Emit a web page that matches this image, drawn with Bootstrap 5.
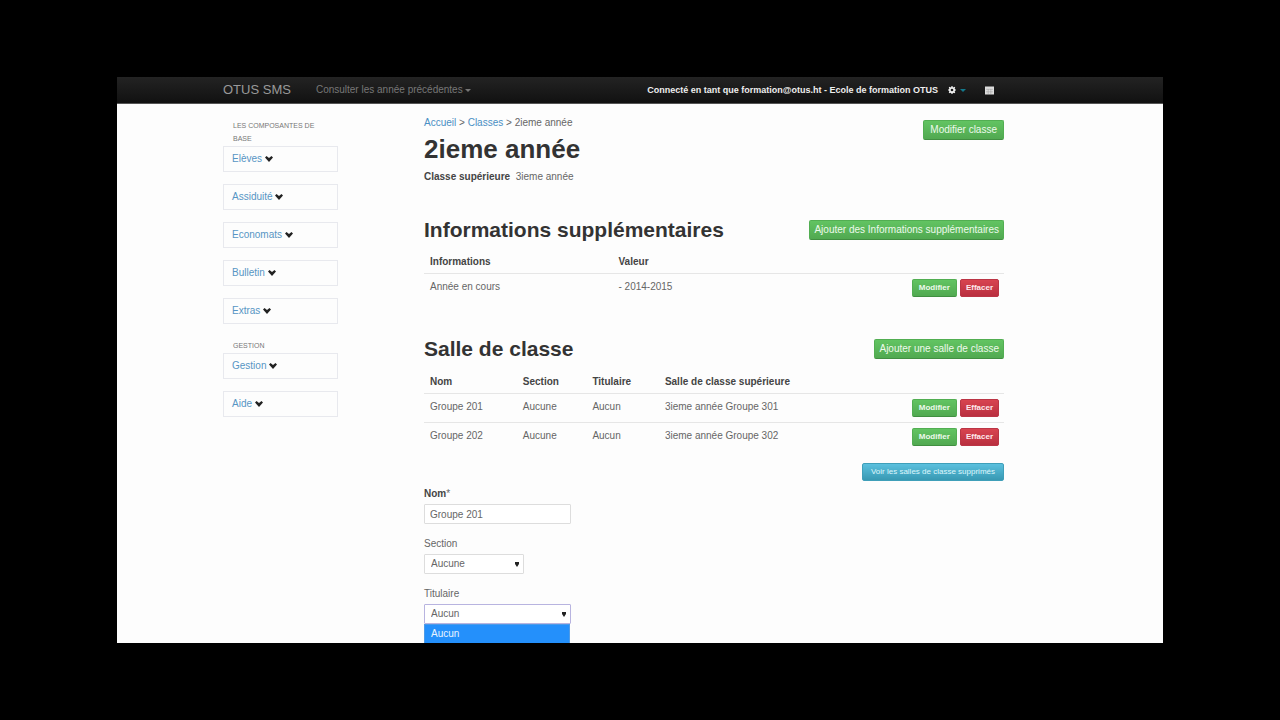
<!DOCTYPE html>
<html lang="fr">
<head>
<meta charset="utf-8">
<meta name="viewport" content="width=device-width, initial-scale=1">
<title>OTUS SMS - 2ieme année</title>
<link href="https://cdn.jsdelivr.net/npm/bootstrap@5.3.0/dist/css/bootstrap.min.css" rel="stylesheet">
<style>
body { background: #000; font-family: "Liberation Sans", Arial, sans-serif; font-size: 10px; line-height: 14px; color: #666; padding: 77px 117px; height: 100vh; overflow: hidden; }
a { color: #4a8fc4; text-decoration: none; }
.screen { background: #fdfdfd; height: 100%; overflow: hidden; }
.wrap { width: 100%; max-width: 834px; margin: 0 auto; }
.topbar { background: linear-gradient(#232323, #111); border-bottom: 1px solid #555; padding: 0; height: 27px; }
.topbar .wrap { padding-right: 63px; }
.topbar .navbar-brand { font-size: 13px; line-height: 24px; color: #999; padding: 0; margin: 0 25px 0 0; }
.topbar a { color: #777; }
.topbar .who { color: #eee; font-size: 9px; margin-right: 10px; }
.topbar .calendar { margin-left: 19px; }
.caret { display: inline-block; border: 3px solid transparent; border-top-color: currentColor; border-bottom: 0; vertical-align: middle; }
.side { width: 115px; flex: none; padding-top: 15px; margin-right: 86px; }
.side h6 { font-size: 7px; line-height: 13px; font-weight: 400; color: #777; text-transform: uppercase; margin: 0; padding: 0 10px 1px; }
.side .entry { display: block; border: 1px solid #e8e9ee; height: 26px; line-height: 24px; padding-left: 8px; margin-bottom: 12px; color: #5795c4; }
.side h6:not(:first-child) { padding-top: 3px; }
.content { flex: 1; padding-top: 12px; margin-right: 53px; min-width: 0; }
h1 { font-size: 26px; line-height: 30px; font-weight: 700; color: #333; margin: 4px 0 6px; }
h2 { font-size: 21px; line-height: 28px; font-weight: 700; color: #333; margin: 0; }
.content b, .content th { color: #444; font-weight: 700; }
.act { --bs-btn-padding-x: 4px; --bs-btn-padding-y: 2px; --bs-btn-font-size: 10px; --bs-btn-line-height: 14px; --bs-btn-border-radius: 2px; color: #eefaec; border-color: #52ae52; border-bottom-color: #418f41; background: linear-gradient(#62c462, #51a951); }
.act-page { --bs-btn-padding-x: 6px; }
.act-sm { --bs-btn-padding-x: 6px; --bs-btn-padding-y: 1px; --bs-btn-font-size: 8px; --bs-btn-font-weight: 700; }
.act-danger { --bs-btn-padding-x: 5px; background: linear-gradient(#d84450, #b92f3f); border-color: #bb3545; color: #ffe9ec; }
.act-info { --bs-btn-padding-x: 8px; --bs-btn-font-weight: 400; background: linear-gradient(#5bc0de, #3899b3); border-color: #3f9fb9; color: #def6fb; }
.pair { gap: 3px; }
.rooms { padding-top: 25px; }
.grid-table { table-layout: fixed; margin: 5px 0 0; --bs-table-bg: transparent; }
.grid-table th, .grid-table td { padding: 5px 6px; vertical-align: top; border-bottom: 0; color: #666; }
.grid-table th { color: #444; padding: 6px 6px 4px; }
.rooms .grid-table th { padding: 7px 6px 4px; }
.grid-table tbody tr { border-top: 1px solid #e6e6e6; }
.grid-table td { line-height: 16px; }
.grid-table td:last-child { padding-right: 5px; }
.deleted { padding-top: 12px; margin-bottom: 6px; }
.field { width: 147px; height: 20px; border: 1px solid #ddd; border-radius: 1px; padding: 0 5px; font-size: 10px; line-height: 14px; color: #666; background-color: #fff; }
select.field { appearance: none; background-image: url("data:image/svg+xml,%3Csvg xmlns='http://www.w3.org/2000/svg' width='4' height='5'%3E%3Cpath d='M0 0h4v2L2 5 0 2z' fill='%23222'/%3E%3C/svg%3E"); background-repeat: no-repeat; background-position: right 4px center; padding-left: 6px; }
.field.short { width: 100px; }
.field.open { border-color: #b8b4e0; }
.choices { top: 100%; left: 0; width: 146px; background: #2490fb; border: 1px solid #4d9be8; color: #e8f4ff; margin: 0; padding: 2px 6px 4px; list-style: none; }
.entry-row { margin-bottom: 13px; }
.entry-row label { display: block; margin-bottom: 3px; }
</style>
</head>
<body>
<div class="screen">
  <nav class="navbar topbar">
    <div class="wrap d-flex align-items-center">
      <a class="navbar-brand" href="#">OTUS SMS</a>
      <a href="#">Consulter les année précédentes <span class="caret"></span></a>
      <span class="who ms-auto fw-bold">Connecté en tant que formation@otus.ht - Ecole de formation OTUS</span>
      <a class="d-flex align-items-center" href="#" aria-label="Paramètres">
        <svg width="8" height="8" viewBox="0 0 9 9"><circle cx="4.500" cy="4.500" r="2.500" fill="none" stroke="#eee" stroke-width="2"/><path d="M4.500 0v1.500M4.500 7.500V9M0 4.500h1.500M7.500 4.500H9M1.300 1.300l1 1M6.700 6.700l1 1M7.700 1.300l-1 1M2.300 6.700l-1 1" stroke="#eee" stroke-width="1.400"/></svg>
        <svg class="ms-1" width="6" height="3" viewBox="0 0 6 3"><path d="M0 0h6L3 3z" fill="#13798c"/></svg>
      </a>
      <a class="calendar d-flex" href="#" aria-label="Calendrier">
        <svg width="9" height="9" viewBox="0 0 9 9"><path fill="#ddd" d="M0 .500h9v8H0z"/><path d="M1 3.300h7M1 5.800h7M3.200 3v5M5.800 3v5" stroke="#999" stroke-width=".5"/></svg>
      </a>
    </div>
  </nav>
  <div class="wrap d-flex">
    <aside class="side">
      <h6>Les composantes de base</h6>
      <a class="entry" href="#">Elèves <svg width="8" height="6" viewBox="0 0 8 6"><path d="M0 1.500L1.500 0 4 2 6.500 0 8 1.500 4 6z" fill="#222"/></svg></a>
      <a class="entry" href="#">Assiduité <svg width="8" height="6" viewBox="0 0 8 6"><path d="M0 1.500L1.500 0 4 2 6.500 0 8 1.500 4 6z" fill="#222"/></svg></a>
      <a class="entry" href="#">Economats <svg width="8" height="6" viewBox="0 0 8 6"><path d="M0 1.500L1.500 0 4 2 6.500 0 8 1.500 4 6z" fill="#222"/></svg></a>
      <a class="entry" href="#">Bulletin <svg width="8" height="6" viewBox="0 0 8 6"><path d="M0 1.500L1.500 0 4 2 6.500 0 8 1.500 4 6z" fill="#222"/></svg></a>
      <a class="entry" href="#">Extras <svg width="8" height="6" viewBox="0 0 8 6"><path d="M0 1.500L1.500 0 4 2 6.500 0 8 1.500 4 6z" fill="#222"/></svg></a>
      <h6>Gestion</h6>
      <a class="entry" href="#">Gestion <svg width="8" height="6" viewBox="0 0 8 6"><path d="M0 1.500L1.500 0 4 2 6.500 0 8 1.500 4 6z" fill="#222"/></svg></a>
      <a class="entry" href="#">Aide <svg width="8" height="6" viewBox="0 0 8 6"><path d="M0 1.500L1.500 0 4 2 6.500 0 8 1.500 4 6z" fill="#222"/></svg></a>
    </aside>
    <main class="content">
      <div class="d-flex justify-content-between align-items-start">
        <div>
          <div><a href="#">Accueil</a> &gt; <a href="#">Classes</a> &gt; 2ieme année</div>
          <h1>2ieme année</h1>
          <div><b>Classe supérieure</b>&nbsp; 3ieme année</div>
        </div>
        <button type="button" class="btn act act-page mt-1">Modifier classe</button>
      </div>

      <section class="pt-4 mt-2">
        <div class="d-flex justify-content-between align-items-center">
          <h2>Informations supplémentaires</h2>
          <button type="button" class="btn act">Ajouter des Informations supplémentaires</button>
        </div>
        <table class="table grid-table">
          <colgroup><col style="width:32.500%"><col><col style="width:100px"></colgroup>
          <thead><tr><th>Informations</th><th>Valeur</th><th></th></tr></thead>
          <tbody><tr><td>Année en cours</td><td>- 2014-2015</td><td><div class="pair d-flex justify-content-end"><button type="button" class="btn act act-sm">Modifier</button><button type="button" class="btn act act-sm act-danger">Effacer</button></div></td></tr></tbody>
        </table>
      </section>

      <section class="rooms mt-2">
        <div class="d-flex justify-content-between align-items-center">
          <h2>Salle de classe</h2>
          <button type="button" class="btn act">Ajouter une salle de classe</button>
        </div>
        <table class="table grid-table">
          <colgroup><col style="width:16%"><col style="width:12%"><col style="width:12.500%"><col><col style="width:100px"></colgroup>
          <thead><tr><th>Nom</th><th>Section</th><th>Titulaire</th><th>Salle de classe supérieure</th><th></th></tr></thead>
          <tbody>
            <tr><td>Groupe 201</td><td>Aucune</td><td>Aucun</td><td>3ieme année Groupe 301</td><td><div class="pair d-flex justify-content-end"><button type="button" class="btn act act-sm">Modifier</button><button type="button" class="btn act act-sm act-danger">Effacer</button></div></td></tr>
            <tr><td>Groupe 202</td><td>Aucune</td><td>Aucun</td><td>3ieme année Groupe 302</td><td><div class="pair d-flex justify-content-end"><button type="button" class="btn act act-sm">Modifier</button><button type="button" class="btn act act-sm act-danger">Effacer</button></div></td></tr>
          </tbody>
        </table>
        <div class="deleted d-flex justify-content-end"><button type="button" class="btn act act-sm act-info">Voir les salles de classe supprimés</button></div>
      </section>

      <form>
        <div class="entry-row"><label for="nom"><b>Nom</b>*</label><input class="field d-block" id="nom" type="text" value="Groupe 201"></div>
        <div class="entry-row"><label for="section">Section</label><select class="field short d-block" id="section"><option>Aucune</option></select></div>
        <div class="entry-row"><label for="titulaire">Titulaire</label>
          <div class="position-relative">
            <select class="field open d-block" id="titulaire"><option>Aucun</option></select>
            <ul class="choices position-absolute"><li>Aucun</li></ul>
          </div>
        </div>
      </form>
    </main>
  </div>
</div>
<script src="https://cdn.jsdelivr.net/npm/bootstrap@5.3.0/dist/js/bootstrap.bundle.min.js"></script>
</body>
</html>
